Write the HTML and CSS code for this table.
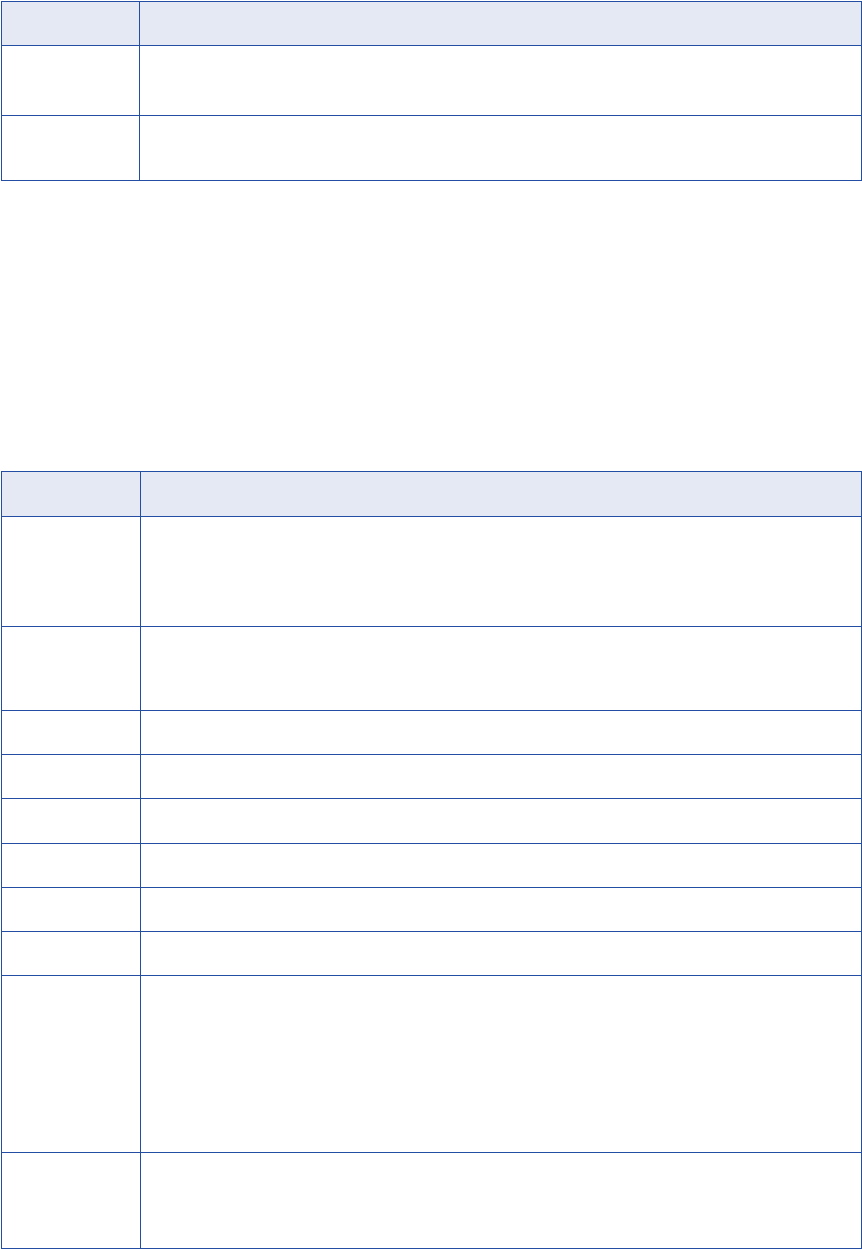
FILE: index.html
```html
<!DOCTYPE html>
<html>
    <head>
        <title>Tables</title>
        <link rel="stylesheet" href="styles.css">
    </head>
    <body>
        <!-- first table -->
        <table class="grid">
            <tr class="head h44"><th class="key"></th><th></th></tr>
            <tr class="h70"><td></td><td></td></tr>
            <tr class="h65"><td></td><td></td></tr>
        </table>

        <!-- second table -->
        <table class="grid second">
            <tr class="head h45"><th class="key2"></th><th></th></tr>
            <tr class="h110"><td></td><td></td></tr>
            <tr class="h84"><td></td><td></td></tr>
            <tr class="h44"><td></td><td></td></tr>
            <tr class="h44"><td></td><td></td></tr>
            <tr class="h45"><td></td><td></td></tr>
            <tr class="h44"><td></td><td></td></tr>
            <tr class="h44"><td></td><td></td></tr>
            <tr class="h44"><td></td><td></td></tr>
            <tr class="h177"><td></td><td></td></tr>
            <tr class="h96"><td></td><td></td></tr>
        </table>
    </body>
</html>
```
FILE: styles.css
```css
body {
    margin: 0px;
    padding-top: 1px;
    padding-left: 1px;
    background-color: #ffffff;
    font-family: "Liberation Sans", Arial, sans-serif;
    font-size: 14px;
}
.grid {
    border-collapse: collapse;
    width: 861px;
    table-layout: fixed;
}
.grid th,
.grid td {
    border: 1px solid #234ea3;
    padding: 0px;
}
.grid .head th {
    background-color: #e4e9f4;
}
.key {
    width: 137px;
}
.key2 {
    width: 138px;
}
.second {
    margin-top: 290px;
}
.h44 { height: 44px; }
.h45 { height: 45px; }
.h65 { height: 65px; }
.h70 { height: 70px; }
.h84 { height: 84px; }
.h96 { height: 96px; }
.h110 { height: 110px; }
.h177 { height: 177px; }
```
